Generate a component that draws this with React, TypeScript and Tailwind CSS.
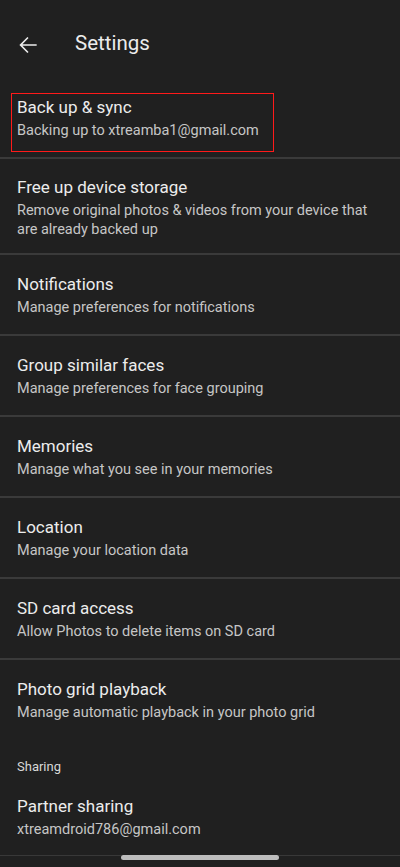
const ROWS = [
  { title: "Back up & sync", sub: "Backing up to xtreamba1@gmail.com", marked: true },
  {
    title: "Free up device storage",
    sub: "Remove original photos & videos from your device that are already backed up",
    tall: true,
  },
  { title: "Notifications", sub: "Manage preferences for notifications" },
  { title: "Group similar faces", sub: "Manage preferences for face grouping" },
  { title: "Memories", sub: "Manage what you see in your memories" },
  { title: "Location", sub: "Manage your location data" },
  { title: "SD card access", sub: "Allow Photos to delete items on SD card" },
  { title: "Photo grid playback", sub: "Manage automatic playback in your photo grid", last: true },
];

function Row({ title, sub, marked, tall, last }: { title: string; sub: string; marked?: boolean; tall?: boolean; last?: boolean }) {
  return (
    <div className={last ? "" : "border-b-2 border-[#3a3a3a]"}>
      <div className={`relative flex flex-col justify-center px-[17px] ${tall ? "h-[94px] pt-[3px]" : "h-[79px]"}`}>
        <div className="text-[17px] leading-[23px] text-[#ececec]">{title}</div>
        <div className="text-[14.5px] leading-[19px] text-[#c6c6c6] mt-[2px]">{sub}</div>
        {/* red highlight box from the screenshot */}
        {marked && (
          <div className="absolute left-[12px] top-[16px] w-[261px] h-[57px] outline outline-1 outline-[#ff1a1a]" />
        )}
      </div>
    </div>
  );
}

export default function App() {
  return (
    <div
      className="w-[400px] h-[867px] bg-[#202020] overflow-hidden flex flex-col"
      style={{ fontFamily: "Roboto, 'Noto Sans', sans-serif" }}
    >
      {/* top bar */}
      <div className="h-[78px] flex items-center shrink-0 pt-[8px]">
        <svg viewBox="0 0 24 24" className="ml-[15px] w-[26px] h-[26px] mt-[3px]" fill="#ececec">
          <path d="M20 11.25H6.9l5.6-5.6L11.45 4.6 4.05 12l7.4 7.4 1.05-1.05-5.6-5.6H20z" />
        </svg>
        <div className="ml-[34px] text-[20.5px] text-[#ececec]">Settings</div>
      </div>

      {ROWS.map((r) => (
        <Row key={r.title} {...r} />
      ))}

      {/* sharing section */}
      <div className="h-[39px] pt-[18px] px-[17px] text-[13px] leading-[20px] text-[#d8d8d8]">Sharing</div>
      <div className="flex flex-col justify-center px-[17px] h-[77px]">
        <div className="text-[17px] leading-[23px] text-[#ececec]">Partner sharing</div>
        <div className="text-[14.5px] leading-[19px] text-[#c6c6c6] mt-[2px]">xtreamdroid786@gmail.com</div>
      </div>

      {/* gesture bar */}
      <div className="flex-1 border-t border-[#383838] flex justify-center">
        <div className="w-[158px] h-[5px] -mt-[1px] rounded-full bg-[#bdbdbd]" />
      </div>
    </div>
  );
}
